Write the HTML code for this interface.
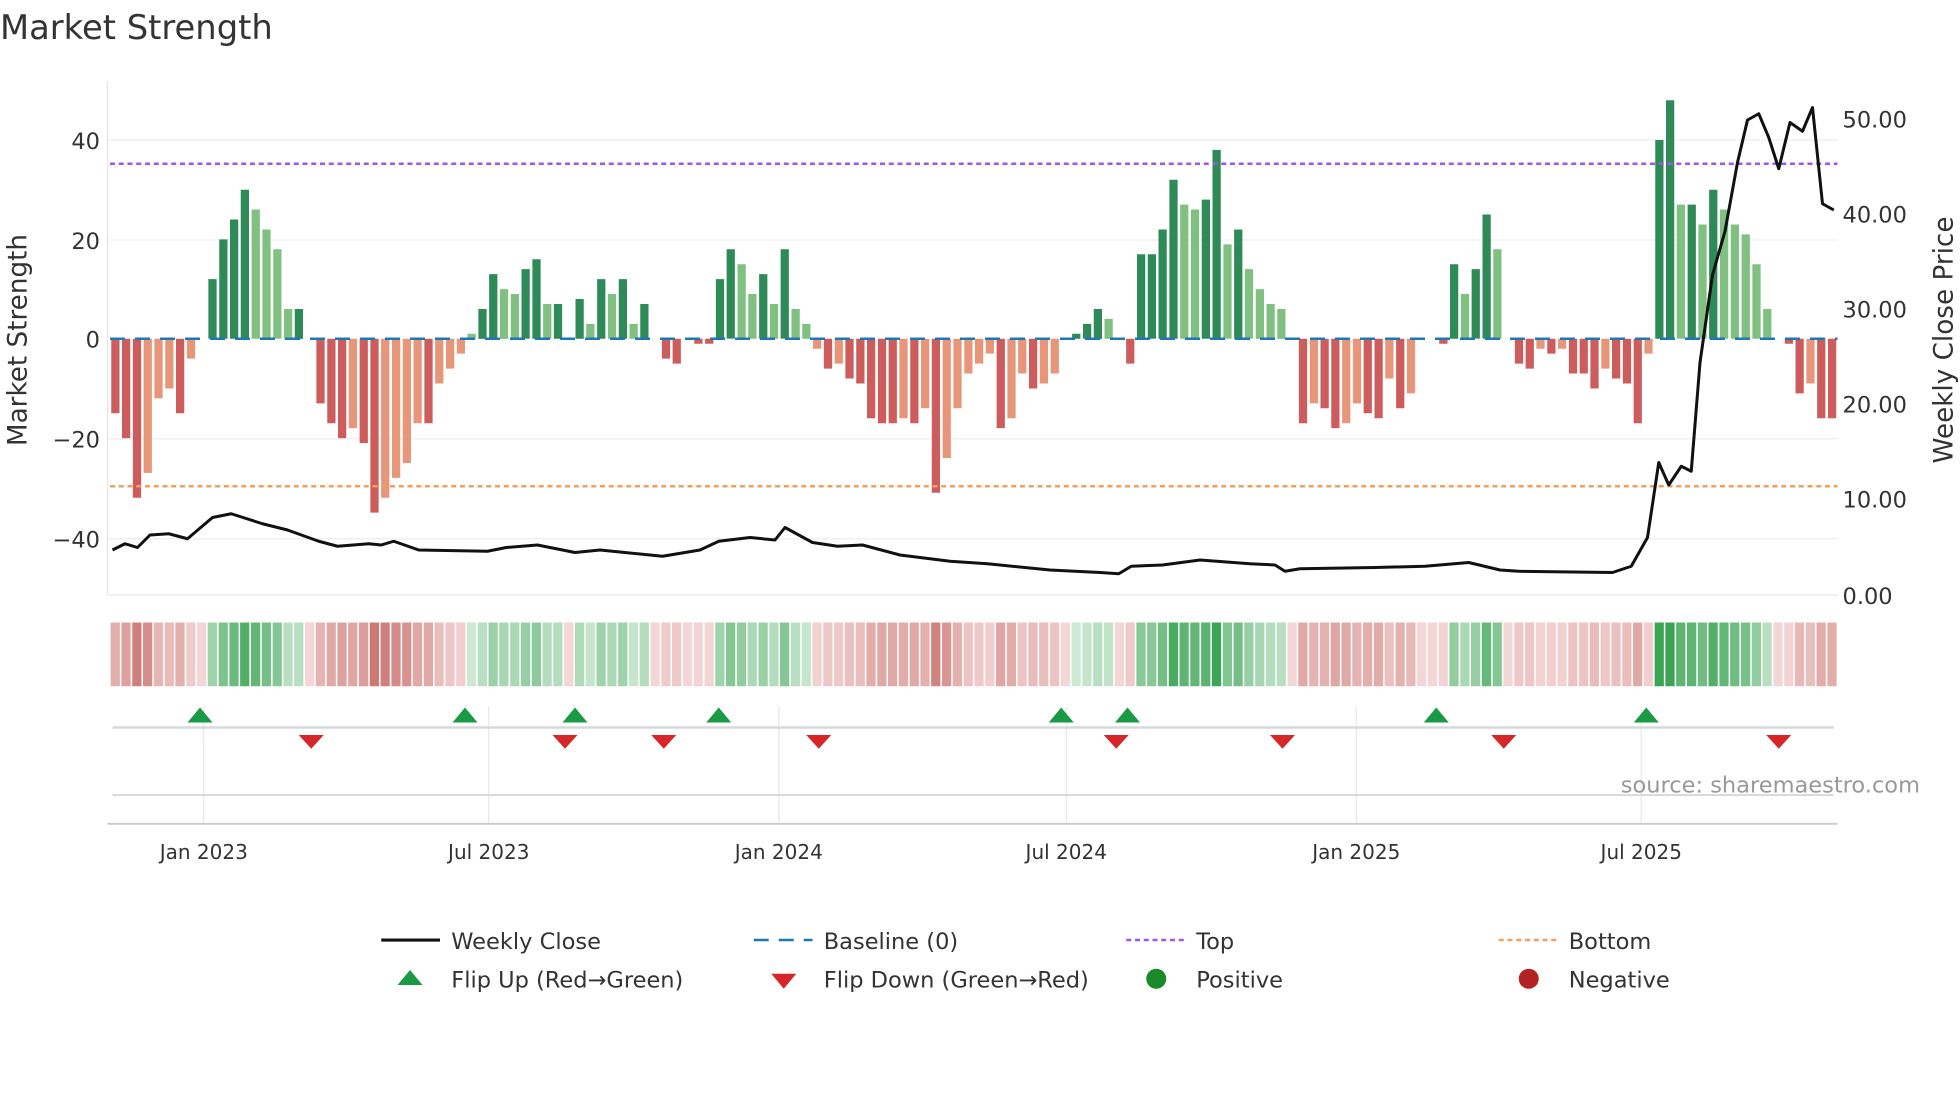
<!DOCTYPE html>
<html><head><meta charset="utf-8">
<style>
html,body{margin:0;padding:0;background:#fff;width:1960px;height:1102px;overflow:hidden}
svg{display:block}
text{font-family:"DejaVu Sans","Liberation Sans",sans-serif;fill:#333}
</style></head><body>
<svg id="s" width="1960" height="1102" viewBox="0 0 1568 881.6" xmlns="http://www.w3.org/2000/svg">
<text x="0" y="31" font-size="27" fill="#333">Market Strength</text>
<g stroke="#eee" stroke-width="1">
<line x1="86" x2="1470" y1="112" y2="112"/><line x1="86" x2="1470" y1="192" y2="192"/>
<line x1="86" x2="1470" y1="351" y2="351"/><line x1="86" x2="1470" y1="431" y2="431"/>
</g>
<line x1="86" x2="86" y1="65" y2="476" stroke="#e5e5e5"/>
<line x1="86" x2="1470" y1="476" y2="476" stroke="#e5e5e5"/>
<g font-size="18" text-anchor="end">
<text x="80" y="119">40</text><text x="80" y="199">20</text><text x="80" y="278">0</text>
<text x="80" y="358">−20</text><text x="80" y="438">−40</text>
</g>
<g font-size="18">
<text x="1474" y="102">50.00</text><text x="1474" y="178">40.00</text><text x="1474" y="254">30.00</text>
<text x="1474" y="330">20.00</text><text x="1474" y="406">10.00</text><text x="1474" y="483">0.00</text>
</g>
<text transform="translate(21,272) rotate(-90)" font-size="21" text-anchor="middle">Market Strength</text>
<text transform="translate(1562,272) rotate(-90)" font-size="21" text-anchor="middle">Weekly Close Price</text>
<g id="bars"></g>
<line x1="88" x2="1470" y1="271" y2="271" stroke="#1f77b4" stroke-width="2" stroke-dasharray="12,8"/>
<line x1="88" x2="1470" y1="131" y2="131" stroke="#9b59e6" stroke-width="2" stroke-dasharray="4,3"/>
<line x1="88" x2="1470" y1="389" y2="389" stroke="#f0a060" stroke-width="2" stroke-dasharray="4,3"/>
<polyline id="price" fill="none" stroke="#111" stroke-width="2.4" stroke-linejoin="round"/>
<g id="heat"></g>
<g stroke="#e8e8e8"><line x1="163" x2="163" y1="565" y2="660"/><line x1="391" x2="391" y1="565" y2="660"/><line x1="623" x2="623" y1="565" y2="660"/><line x1="853" x2="853" y1="565" y2="660"/><line x1="1085" x2="1085" y1="565" y2="660"/><line x1="1313" x2="1313" y1="565" y2="660"/></g>
<line x1="90" x2="1467" y1="582" y2="582" stroke="#d5d8dc" stroke-width="2"/>
<line x1="90" x2="1467" y1="636" y2="636" stroke="#d5d8dc" stroke-width="1.5"/>
<line x1="86" x2="1470" y1="659" y2="659" stroke="#ccc" stroke-width="1.5"/>
<g id="marks"></g>
<text x="1536" y="634" font-size="18" text-anchor="end" style="fill:#999">source: sharemaestro.com</text>
<g font-size="16" text-anchor="middle">
<text x="163" y="687">Jan 2023</text><text x="391" y="687">Jul 2023</text><text x="623" y="687">Jan 2024</text>
<text x="853" y="687">Jul 2024</text><text x="1085" y="687">Jan 2025</text><text x="1313" y="687">Jul 2025</text>
</g>
<g font-size="18">
<line x1="305" x2="352" y1="752" y2="752" stroke="#111" stroke-width="2.5"/><text x="361" y="759">Weekly Close</text>
<line x1="603" x2="650" y1="752" y2="752" stroke="#1f77b4" stroke-width="2" stroke-dasharray="12,8"/><text x="659" y="759">Baseline (0)</text>
<line x1="901" x2="948" y1="752" y2="752" stroke="#9b59e6" stroke-width="2" stroke-dasharray="4,3"/><text x="957" y="759">Top</text>
<line x1="1199" x2="1246" y1="752" y2="752" stroke="#f0a060" stroke-width="2" stroke-dasharray="4,3"/><text x="1255" y="759">Bottom</text>
<polygon points="318,788 338,788 328,776" fill="#1a9a44"/><text x="361" y="790">Flip Up (Red→Green)</text>
<polygon points="617,779 637,779 627,791" fill="#d62728"/><text x="659" y="790">Flip Down (Green→Red)</text>
<circle cx="925" cy="783" r="8" fill="#1a8a2a"/><text x="957" y="790">Positive</text>
<circle cx="1223" cy="783" r="8" fill="#b22222"/><text x="1255" y="790">Negative</text>
</g>
</svg>
<script>
var v=[-15,-20,-32,-27,-12,-10,-15,-4,0,12,20,24,30,26,22,18,6,6,0,-13,-17,-20,-18,-21,-35,-32,-28,-25,-17,-17,-9,-6,-3,1,6,13,10,9,14,16,7,7,0,8,3,12,9,12,3,7,0,-4,-5,0,-1,-1,12,18,15,9,13,7,18,6,3,-2,-6,-5,-8,-9,-16,-17,-17,-16,-17,-14,-31,-24,-14,-7,-5,-3,-18,-16,-7,-10,-9,-7,0,1,3,6,4,0,-5,17,17,22,32,27,26,28,38,19,22,14,10,7,6,0,-17,-13,-14,-18,-17,-13,-15,-16,-8,-14,-11,0,0,-1,15,9,14,25,18,0,-5,-6,-2,-3,-2,-7,-7,-10,-6,-8,-9,-17,-3,40,48,27,27,23,30,26,23,21,15,6,0,-1,-11,-9,-16,-16];
var n=v.length,x0=88,w=(1470-88)/n,b='',h='';
for(var i=0;i<n;i++){var a=v[i],p=i?v[i-1]:0,x=x0+i*w;var dark=Math.abs(a)>=Math.abs(p);
var c=a>=0?(dark?'#2e8b57':'#80c080'):(dark?'#cd5c5c':'#e8967a');
if(a!==0){var y=a>0?271-a*3.975:271;b+='<rect x="'+(x+1).toFixed(1)+'" y="'+y.toFixed(1)+'" width="'+(w-2).toFixed(1)+'" height="'+(Math.abs(a)*3.975).toFixed(1)+'" fill="'+c+'"/>';}
var t=Math.min(1,Math.abs(a)/35),hc;
if(a>0){hc='rgb('+Math.round(210-150*t)+','+Math.round(235-70*t)+','+Math.round(215-130*t)+')';}
else{hc='rgb('+Math.round(243-38*t)+','+Math.round(215-95*t)+','+Math.round(215-100*t)+')';}
h+='<rect x="'+(x+0.5).toFixed(1)+'" y="498" width="'+(w-1.2).toFixed(1)+'" height="51" fill="'+hc+'"/>';}
document.getElementById('bars').innerHTML=b;document.getElementById('heat').innerHTML=h;
var pts=[[90,440],[100,435],[110,438],[120,428],[135,427],[150,431],[170,414],[185,411],[210,419],[230,424],[255,433],[270,437],[295,435],[305,436],[315,433],[335,440],[390,441],[405,438],[430,436],[460,442],[480,440],[530,445],[560,440],[575,433],[600,430],[620,432],[628,422],[650,434],[670,437],[690,436],[720,444],[760,449],[790,451],[840,456],[880,458],[895,459],[905,453],[930,452],[960,448],[1000,451],[1020,452],[1028,457],[1040,455],[1100,454],[1140,453],[1175,450],[1200,456],[1215,457],[1290,458],[1305,453],[1318,430],[1327,370],[1335,388],[1345,373],[1353,377],[1360,290],[1370,220],[1380,185],[1390,130],[1398,96],[1407,91],[1415,110],[1423,135],[1432,98],[1442,105],[1450,86],[1458,163],[1467,168]];
document.getElementById('price').setAttribute('points',pts.map(function(p){return p.join(',')}).join(' '));
var up=[160,372,460,575,849,902,1149,1317],dn=[249,452,531,655,893,1026,1203,1423],m='';
up.forEach(function(x){m+='<polygon points="'+(x-10)+',578 '+(x+10)+',578 '+x+',566" fill="#1a9a44"/>';});
dn.forEach(function(x){m+='<polygon points="'+(x-10)+',588 '+(x+10)+',588 '+x+',599" fill="#d62728"/>';});
document.getElementById('marks').innerHTML=m;
</script>
</body></html>
